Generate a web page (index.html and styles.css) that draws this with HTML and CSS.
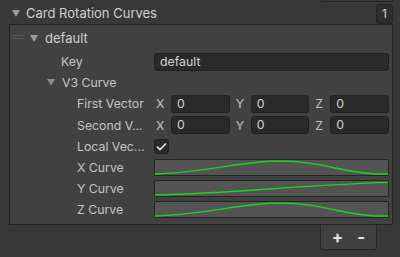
FILE: index.html
```html
<!DOCTYPE html>
<html lang="en">
<head>
    <meta charset="UTF-8">
    <title>Card Rotation Curves</title>
    <link rel="stylesheet" href="styles.css">
</head>
<body>

    <div class="top-stub"></div>

    <div class="list-header">
        <span class="arrow"></span>
        <span class="list-title">Card Rotation Curves</span>
        <span class="count">1</span>
    </div>

    <div class="panel">
        <div class="row element-row">
            <span class="handle"></span>
            <span class="arrow"></span>
            <span class="element-name">default</span>
        </div>

        <div class="row">
            <span class="label indent1">Key</span>
            <div class="field text-field">default</div>
        </div>

        <div class="row">
            <span class="arrow arrow-v3"></span>
            <span class="label">V3 Curve</span>
        </div>

        <div class="row">
            <span class="label indent2">First Vector</span>
            <div class="vector">
                <div class="axis"><span>X</span><div class="field">0</div></div>
                <div class="axis"><span>Y</span><div class="field">0</div></div>
                <div class="axis"><span>Z</span><div class="field">0</div></div>
            </div>
        </div>

        <div class="row tall">
            <span class="label indent2">Second V...</span>
            <div class="vector">
                <div class="axis"><span>X</span><div class="field">0</div></div>
                <div class="axis"><span>Y</span><div class="field">0</div></div>
                <div class="axis"><span>Z</span><div class="field">0</div></div>
            </div>
        </div>

        <div class="row">
            <span class="label indent2">Local Vec...</span>
            <div class="checkbox">
                <svg width="11" height="9" viewBox="0 0 11 9"><path d="M1 4.5 L4 7.5 L10 1.5" fill="none" stroke="#e8e8e8" stroke-width="1.6"/></svg>
            </div>
        </div>

        <div class="row">
            <span class="label indent2">X Curve</span>
            <div class="curve">
                <svg viewBox="0 0 233 16" preserveAspectRatio="none"><path d="M0 15 C55 13 85 1 125 1 C165 1 185 13 220 15 L233 15" fill="none" stroke="#1fd21f" stroke-width="1.5"/></svg>
            </div>
        </div>

        <div class="row">
            <span class="label indent2">Y Curve</span>
            <div class="curve">
                <svg viewBox="0 0 233 16" preserveAspectRatio="none"><path d="M0 15 C80 13 150 4 233 1.5" fill="none" stroke="#1fd21f" stroke-width="1.5"/></svg>
            </div>
        </div>

        <div class="row">
            <span class="label indent2">Z Curve</span>
            <div class="curve">
                <svg viewBox="0 0 233 16" preserveAspectRatio="none"><path d="M0 15 C55 13 85 1 125 1 C165 1 185 13 220 15 L233 15" fill="none" stroke="#1fd21f" stroke-width="1.5"/></svg>
            </div>
        </div>
    </div>

    <div class="footer">
        <span>+</span>
        <span>-</span>
    </div>

</body>
</html>
```

FILE: styles.css
```css
body {
    margin: 0;
    background-color: #383838;
    font-family: Inter, "Noto Sans", sans-serif;
    font-size: 12.3px;
    color: #c4c4c4;
}

.top-stub {
    margin-left: 320px;
    width: 71px;
    height: 1px;
    border: 1px solid #262626;
    border-top: none;
    border-radius: 0 0 3px 3px;
}

.list-header {
    display: flex;
    align-items: center;
    height: 22px;
    padding-left: 12px;
}

.arrow {
    width: 0;
    height: 0;
    border-left: 4.5px solid transparent;
    border-right: 4.5px solid transparent;
    border-top: 7px solid #9a9a9a;
}

.list-title {
    margin-left: 6px;
    font-size: 13px;
    color: #cfcfcf;
    flex: 1;
}

.count {
    width: 15px;
    height: 18px;
    margin-top: 2px;
    margin-right: 7px;
    background-color: #2d2d2d;
    border: 1px solid #232323;
    border-radius: 3px;
    text-align: center;
    line-height: 18px;
    color: #d6d6d6;
    font-size: 12px;
}

.panel {
    margin-left: 9px;
    width: 382px;
    height: 196px;
    padding-top: 3px;
    background-color: #414141;
    border: 1px solid #242424;
    box-sizing: content-box;
    display: flex;
    flex-direction: column;
}

.row {
    display: flex;
    align-items: center;
    height: 21px;
    flex-shrink: 0;
}

.row.tall {
    height: 22px;
}

.element-row {
    height: 20px;
    padding-left: 3px;
    margin-bottom: 3px;
}

.handle {
    width: 11px;
    height: 2px;
    border-top: 1px solid #5c5c5c;
    border-bottom: 1px solid #5c5c5c;
    margin-right: 6px;
    margin-top: -2px;
}

.element-name {
    margin-left: 7px;
    font-size: 13px;
    color: #cfcfcf;
}

.arrow-v3 {
    margin-left: 37px;
    border-top-color: #8a8a8a;
}

.label {
    width: 144px;
    flex-shrink: 0;
    box-sizing: border-box;
    white-space: nowrap;
}

.arrow-v3 + .label {
    margin-left: 7px;
}

.indent1 {
    padding-left: 51px;
}

.indent2 {
    padding-left: 67px;
}

.field {
    height: 16px;
    line-height: 16px;
    background-color: #2a2a2a;
    border: 1px solid #212121;
    border-radius: 3px;
    padding-left: 5px;
    color: #d2d2d2;
    box-sizing: content-box;
}

.text-field {
    width: 228px;
}

.vector {
    display: grid;
    grid-template-columns: repeat(3, 1fr);
    gap: 4px;
    width: 235px;
}

.axis {
    display: flex;
    align-items: center;
}

.axis span {
    width: 17px;
    padding-left: 2px;
    box-sizing: border-box;
    flex-shrink: 0;
}

.axis .field {
    flex: 1;
    min-width: 0;
}

.checkbox {
    width: 13px;
    height: 13px;
    background-color: #2a2a2a;
    border: 1px solid #212121;
    border-radius: 3px;
    display: flex;
    align-items: center;
    justify-content: center;
}

.curve {
    width: 233px;
    height: 15px;
    background-color: #545454;
    border: 1px solid #242424;
    border-radius: 2px;
    box-sizing: content-box;
}

.curve svg {
    display: block;
    width: 100%;
    height: 100%;
}

.footer {
    margin-left: 320px;
    width: 55px;
    height: 24px;
    background-color: #414141;
    border: 1px solid #262626;
    border-top: none;
    border-radius: 0 0 3px 3px;
    display: flex;
    align-items: center;
    justify-content: center;
    gap: 14px;
    color: #e4e4e4;
    font-size: 17px;
    font-weight: bold;
}
```
